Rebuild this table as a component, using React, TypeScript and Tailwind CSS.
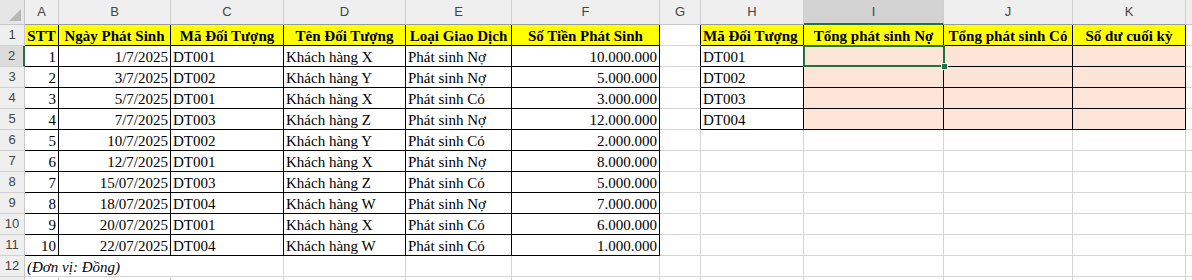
import React from "react";

const COLS = ["", "A", "B", "C", "D", "E", "F", "G", "H", "I", "J", "K", ""];

type Cell = {
  text?: string;
  align?: "left" | "right" | "center";
  bold?: boolean;
  italic?: boolean;
  bg?: "yellow" | "pink";
  spill?: boolean;
};

const data: [string, string, string, string, string, string][] = [
  ["1", "1/7/2025", "DT001", "Khách hàng X", "Phát sinh Nợ", "10.000.000"],
  ["2", "3/7/2025", "DT002", "Khách hàng Y", "Phát sinh Nợ", "5.000.000"],
  ["3", "5/7/2025", "DT001", "Khách hàng X", "Phát sinh Có", "3.000.000"],
  ["4", "7/7/2025", "DT003", "Khách hàng Z", "Phát sinh Nợ", "12.000.000"],
  ["5", "10/7/2025", "DT002", "Khách hàng Y", "Phát sinh Có", "2.000.000"],
  ["6", "12/7/2025", "DT001", "Khách hàng X", "Phát sinh Nợ", "8.000.000"],
  ["7", "15/07/2025", "DT003", "Khách hàng Z", "Phát sinh Có", "5.000.000"],
  ["8", "18/07/2025", "DT004", "Khách hàng W", "Phát sinh Nợ", "7.000.000"],
  ["9", "20/07/2025", "DT001", "Khách hàng X", "Phát sinh Có", "6.000.000"],
  ["10", "22/07/2025", "DT004", "Khách hàng W", "Phát sinh Có", "1.000.000"],
];

const headers1 = ["STT", "Ngày Phát Sinh", "Mã Đối Tượng", "Tên Đối Tượng", "Loại Giao Dịch", "Số Tiền Phát Sinh"];
const headers2 = ["Mã Đối Tượng", "Tổng phát sinh Nợ", "Tổng phát sinh Có", "Số dư cuối kỳ"];

function inTable(r: number, c: number) {
  if (r >= 1 && r <= 11 && c >= 1 && c <= 6) return true;
  if (r >= 1 && r <= 5 && c >= 8 && c <= 11) return true;
  return false;
}

function getCell(r: number, c: number): Cell {
  if (r === 1) {
    if (c >= 1 && c <= 6) return { text: headers1[c - 1], bold: true, align: "center", bg: "yellow" };
    if (c >= 8 && c <= 11)
      return { text: headers2[c - 8], bold: true, align: c === 8 ? "left" : "center", bg: "yellow" };
    return {};
  }
  if (r >= 2 && r <= 11 && c >= 1 && c <= 6) {
    const v = data[r - 2][c - 1];
    const align = c === 1 || c === 2 || c === 6 ? "right" : "left";
    return { text: v, align };
  }
  if (r >= 2 && r <= 5) {
    if (c === 8) return { text: `DT00${r - 1}`, align: "left" };
    if (c >= 9 && c <= 11) return { bg: "pink" };
  }
  if (r === 12 && c === 1) return { text: "(Đơn vị: Đồng)", italic: true, spill: true, align: "left" };
  return {};
}

export default function App() {
  const rows = Array.from({ length: 14 }, (_, i) => i);
  const cells: React.ReactNode[] = [];

  rows.forEach((r) => {
    COLS.forEach((col, c) => {
      const key = `${r}-${c}`;
      if (r === 0 && c === 0) {
        cells.push(
          <div key={key} className="relative bg-[#e6e6e6] border-r border-b border-r-[#c8c8c8] border-b-[#c8c8c8]">
            <svg className="absolute right-[3px] bottom-[3px]" width="12" height="12" viewBox="0 0 12 12">
              <polygon points="12,0 12,12 0,12" fill="#b7b7b7" />
            </svg>
          </div>
        );
        return;
      }
      if (r === 0) {
        const selected = c === 9;
        const bottomBlack = inTable(1, c);
        cells.push(
          <div
            key={key}
            className={`flex items-center justify-center text-[13px] text-[#444444] font-['Liberation_Sans',Arial,sans-serif] border-r border-b border-r-[#d0d0d0] ${
              selected ? "bg-[#d2d2d2] border-b-2 border-b-[#217346]" : "bg-[#efefef]"
            } ${!selected ? (bottomBlack ? "border-b-[#9a9a9a]" : "border-b-[#c8c8c8]") : ""}`}
          >
            {col}
          </div>
        );
        return;
      }
      if (c === 0) {
        const selected = r === 2;
        cells.push(
          <div
            key={key}
            className={`flex items-center justify-center text-[13px] text-[#444444] font-['Liberation_Sans',Arial,sans-serif] border-b border-b-[#d0d0d0] ${
              selected ? "bg-[#dcdcdc] border-r-2 border-r-[#217346]" : "bg-[#efefef] border-r border-r-[#c8c8c8]"
            }`}
          >
            {r <= 12 ? r : ""}
          </div>
        );
        return;
      }
      const cell = getCell(r, c);
      const rightBlack = inTable(r, c) || inTable(r, c + 1);
      const bottomBlack = inTable(r, c) || inTable(r + 1, c);
      const noRight = r === 12 && (c === 1 || c === 2);
      const bg = cell.bg === "yellow" ? "bg-[#ffff00]" : cell.bg === "pink" ? "bg-[#fce4d6]" : "";
      const rightCls = noRight ? "border-r-transparent" : rightBlack ? "border-r-black" : "border-r-[#d4d4d4]";
      const bottomCls = bottomBlack ? "border-b-black" : "border-b-[#d4d4d4]";
      const justify =
        cell.align === "right" ? "justify-end pr-[2px]" : cell.align === "center" ? "justify-center" : "justify-start pl-[2px]";
      cells.push(
        <div
          key={key}
          className={`relative flex items-center whitespace-nowrap border-r border-b ${rightCls} ${bottomCls} ${bg} ${justify} ${
            cell.spill ? "overflow-visible z-10" : "overflow-hidden"
          } font-['Liberation_Serif','Times_New_Roman',serif] text-[15px] leading-none text-black ${cell.bold ? "font-bold" : ""} ${
            cell.italic ? "italic" : ""
          }`}
        >
          {cell.text && <span className="pt-[2px]">{cell.text}</span>}
        </div>
      );
    });
  });

  return (
    <div className="w-[1192px] h-[280px] overflow-hidden bg-white">
      <div className="relative grid grid-cols-[25px_34px_112px_113px_122px_106px_148px_41px_103px_140px_129px_113px_20px] grid-rows-[25px_repeat(13,21px)]">
        {cells}
        <div className="pointer-events-none absolute left-[803px] top-[45px] w-[142px] h-[22px] border-2 border-[#217346] z-20" />
        <div className="pointer-events-none absolute left-[941px] top-[63px] w-[7px] h-[7px] bg-[#217346] border border-white z-30" />
      </div>
    </div>
  );
}
